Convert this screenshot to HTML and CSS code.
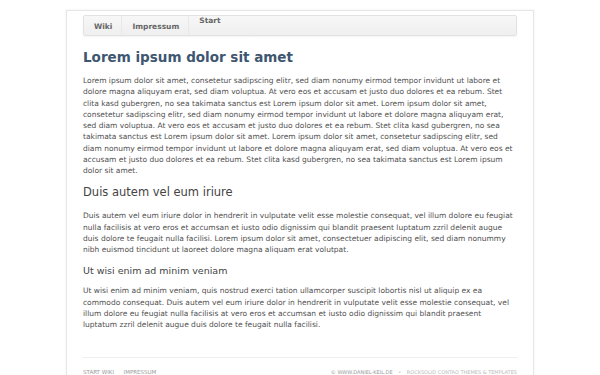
FILE: index.html
```html
<!DOCTYPE html>
<html lang="de">
<head>
  <meta charset="UTF-8">
  <meta name="viewport" content="width=device-width, initial-scale=1.0">
  <title>Start</title>
  <link rel="stylesheet" href="styles.css">
</head>
<body>

  <div class="wrapper">
    <nav class="navbar">
      <a href="#" class="nav-item">Wiki</a>
      <a href="#" class="nav-item">Impressum</a>
      <a href="#" class="nav-item nav-top">Start</a>
    </nav>

    <main class="inhalt">
      <h1>Lorem ipsum dolor sit amet</h1>
      <p>
        Lorem ipsum dolor sit amet, consetetur sadipscing elitr, sed diam nonumy eirmod tempor invidunt ut labore et
        dolore magna aliquyam erat, sed diam voluptua. At vero eos et accusam et justo duo dolores et ea rebum. Stet
        clita kasd gubergren, no sea takimata sanctus est Lorem ipsum dolor sit amet. Lorem ipsum dolor sit amet,
        consetetur sadipscing elitr, sed diam nonumy eirmod tempor invidunt ut labore et dolore magna aliquyam erat,
        sed diam voluptua. At vero eos et accusam et justo duo dolores et ea rebum. Stet clita kasd gubergren, no sea
        takimata sanctus est Lorem ipsum dolor sit amet. Lorem ipsum dolor sit amet, consetetur sadipscing elitr, sed
        diam nonumy eirmod tempor invidunt ut labore et dolore magna aliquyam erat, sed diam voluptua. At vero eos et
        accusam et justo duo dolores et ea rebum. Stet clita kasd gubergren, no sea takimata sanctus est Lorem ipsum
        dolor sit amet.
      </p>

      <h2>Duis autem vel eum iriure</h2>
      <p>
        Duis autem vel eum iriure dolor in hendrerit in vulputate velit esse molestie consequat, vel illum dolore eu feugiat
        nulla facilisis at vero eros et accumsan et iusto odio dignissim qui blandit praesent luptatum zzril delenit augue
        duis dolore te feugait nulla facilisi. Lorem ipsum dolor sit amet, consectetuer adipiscing elit, sed diam nonummy
        nibh euismod tincidunt ut laoreet dolore magna aliquam erat volutpat.
      </p>

      <h3>Ut wisi enim ad minim veniam</h3>
      <p>
        Ut wisi enim ad minim veniam, quis nostrud exerci tation ullamcorper suscipit lobortis nisl ut aliquip ex ea
        commodo consequat. Duis autem vel eum iriure dolor in hendrerit in vulputate velit esse molestie consequat, vel
        illum dolore eu feugiat nulla facilisis at vero eros et accumsan et iusto odio dignissim qui blandit praesent
        luptatum zzril delenit augue duis dolore te feugait nulla facilisi.
      </p>
    </main>

    <footer class="rodape">
      <div class="rodape-links">
        <a href="#">Start Wiki</a>
        <a href="#">Impressum</a>
      </div>
      <div class="rodape-info">
        <span class="autor">&copy; www.daniel-keil.de</span>
        <span class="ponto">&bull;</span>
        <span>Rocksolid Contao Themes &amp; Templates</span>
      </div>
    </footer>
  </div>

</body>
</html>
```

FILE: styles.css
```css
body {
  margin: 0;
  padding: 0;
  background-color: #fff;
  font-family: 'DejaVu Sans', Verdana, sans-serif;
  color: #555;
}

.wrapper {
  width: 434px;
  margin: 10px auto 0;
  padding: 4px 16px 0;
  border: 1px solid #e6e6e6;
  box-shadow: 0 0 3px rgba(0,0,0,0.06);
  background-color: #fff;
}

.navbar {
  display: flex;
  height: 21px;
  background: linear-gradient(to bottom, #f7f7f7, #efefef);
  border: 1px solid #e2e2e2;
  border-radius: 2px;
  box-sizing: border-box;
  box-shadow: 0 1px 2px rgba(0,0,0,0.05);
}

.nav-item {
  display: flex;
  align-items: flex-end;
  padding: 0 9px 4px 10px;
  font-size: 7.5px;
  font-weight: bold;
  color: #666;
  text-decoration: none;
  border-right: 1px solid #e8e8e8;
}

.nav-item:last-child {
  border-right: none;
}

.nav-top {
  align-items: flex-start;
  padding-top: 0;
}

.inhalt {
  padding-top: 13px;
}

h1 {
  margin: 0 0 10px;
  font-size: 13.5px;
  font-weight: bold;
  color: #3e5670;
}

p {
  margin: 0 0 8px;
  font-size: 7.5px;
  line-height: 11.25px;
  color: #505050;
}

h2 {
  margin: 9px 0 11px;
  font-size: 11.5px;
  font-weight: normal;
  color: #444;
}

h3 {
  margin: 10px 0 9px;
  font-size: 9.5px;
  font-weight: normal;
  color: #444;
}

.rodape {
  display: flex;
  justify-content: space-between;
  margin-top: 27px;
  padding-top: 11px;
  border-top: 1px solid #eee;
  font-size: 5px;
  text-transform: uppercase;
  color: #bbb;
}

.rodape-links a {
  font-size: 5.5px;
  color: #999;
  text-decoration: none;
  margin-right: 8px;
}

.rodape-info .autor {
  color: #999;
}

.rodape-info .ponto {
  margin: 0 4px;
}
```
